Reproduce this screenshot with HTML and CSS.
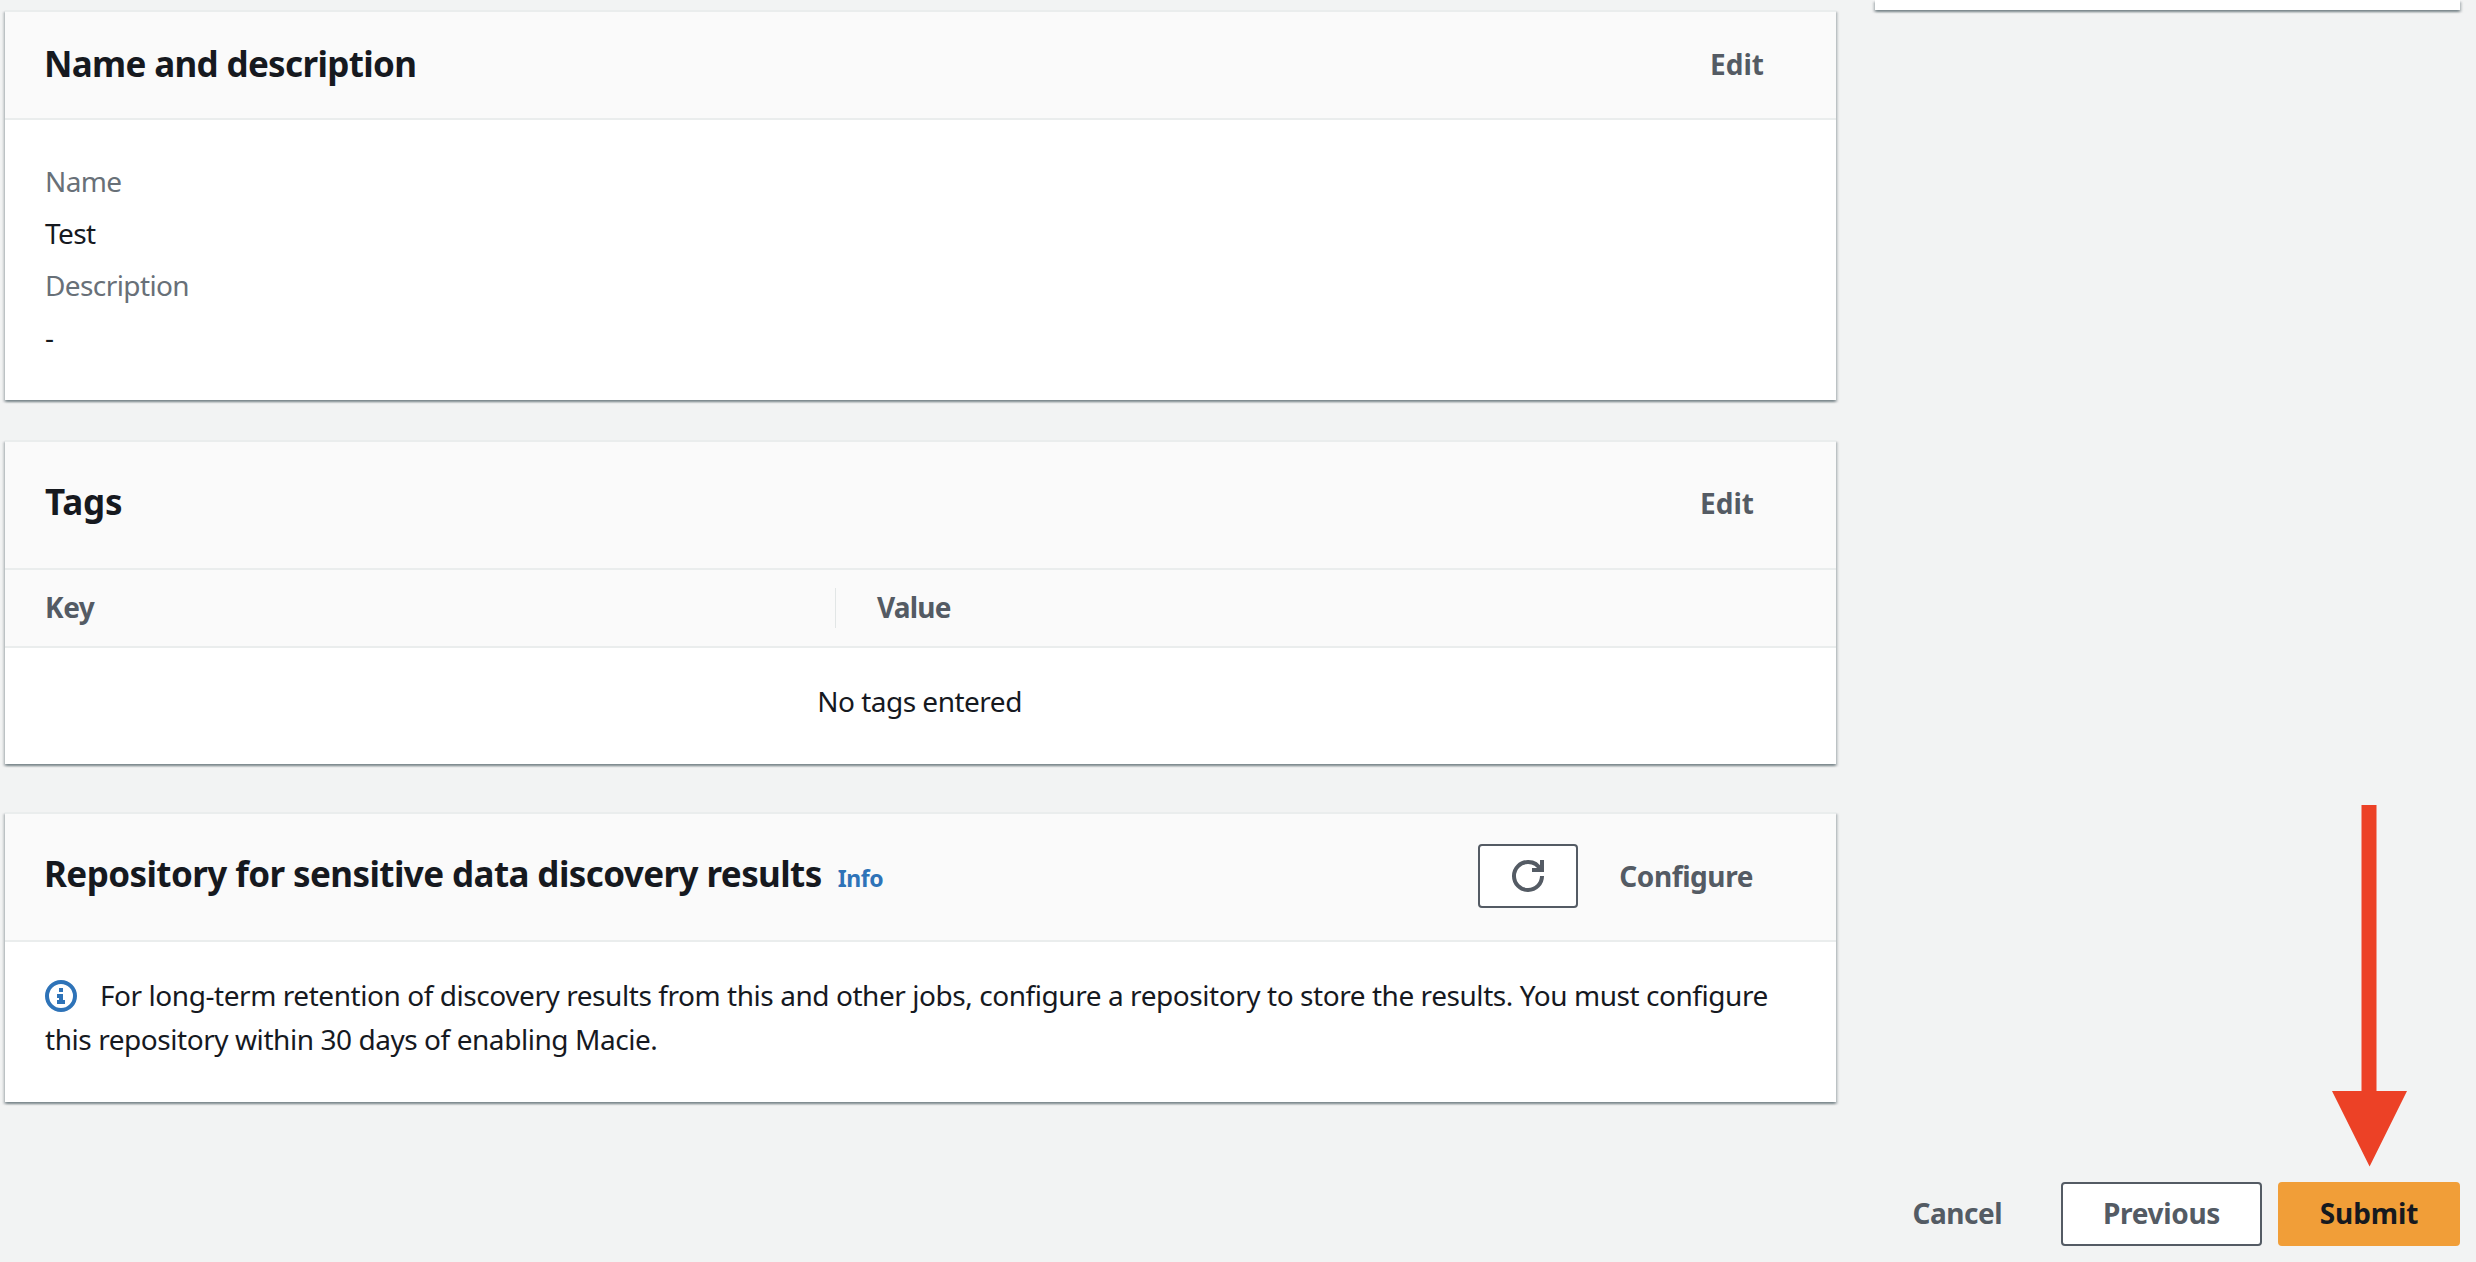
FILE: index.html
```
<!DOCTYPE html>
<html lang="en">
<head>
<meta charset="utf-8">
<title>Review and create</title>
<link rel="stylesheet" href="styles.css">
</head>
<body>
<div class="layout">
  <main class="main">
    <section class="card">
      <header class="card-header card-header--compact">
        <h2 class="title">Name and description</h2>
        <button class="link-button">Edit</button>
      </header>
      <dl class="fields">
        <dt>Name</dt>
        <dd>Test</dd>
        <dt>Description</dt>
        <dd>-</dd>
      </dl>
    </section>

    <section class="card">
      <header class="card-header">
        <h2 class="title title--short">Tags</h2>
        <button class="link-button">Edit</button>
      </header>
      <div class="table-head">
        <div class="th th--key">Key</div>
        <div class="th th--value">Value</div>
      </div>
      <div class="table-empty">No tags entered</div>
    </section>

    <section class="card card--repository">
      <header class="card-header card-header--actions">
        <h2 class="title title--long">Repository for sensitive data discovery results</h2>
        <a class="info">Info</a>
        <div class="actions">
          <button class="button button--icon" aria-label="Refresh">
            <svg class="icon" viewBox="0 0 16 16">
              <path d="M10 5h5V0"/>
              <path d="M15 8a6.957 6.957 0 0 1-7 7 6.957 6.957 0 0 1-7-7 6.957 6.957 0 0 1 7-7 6.87 6.87 0 0 1 6.3 4"/>
            </svg>
          </button>
          <button class="link-button link-button--configure">Configure</button>
        </div>
      </header>
      <p class="notice"><svg class="icon icon--info" viewBox="0 0 16 16">
          <circle cx="8" cy="8" r="7"/>
          <path d="M8 4v2M6 8h2v3M6 11h4"/>
        </svg>For long-term retention of discovery results from this and other jobs, configure a repository to store the results. You must configure this repository within 30 days of enabling Macie.</p>
    </section>
  </main>

  <aside class="side">
    <div class="card card--side"></div>
  </aside>
</div>

<footer class="footer">
  <button class="link-button link-button--cancel">Cancel</button>
  <button class="button button--previous">Previous</button>
  <button class="button button--primary">Submit</button>
</footer>

<svg class="arrow" viewBox="0 0 76 362">
  <path d="M29.5 0h15v286H75L37.6 361.5 0 286h29.5z"/>
</svg>
</body>
</html>
```
FILE: styles.css
```
* {
  box-sizing: border-box;
}

body {
  margin: 0;
  height: 1262px;
  overflow: hidden;
  position: relative;
  background: #f2f3f3;
  color: #16191f;
  font-family: "Noto Sans", "Open Sans", sans-serif;
  font-size: 28px;
  line-height: 44px;
  letter-spacing: -0.44px;
}

h2, p, dl, dd {
  margin: 0;
}

.layout {
  display: grid;
  grid-template-columns: 1831px 585px;
  column-gap: 39px;
  padding-left: 5px;
}

.main {
  display: flex;
  flex-direction: column;
  gap: 40px;
  padding-top: 10px;
}

.card {
  background: linear-gradient(#eaeded 2px, #fff 2px);
  padding-top: 2px;
  box-shadow: 0 2px 2px 0 rgba(0, 28, 36, .3),
              2px 2px 2px 0 rgba(0, 28, 36, .15),
              -2px 2px 2px 0 rgba(0, 28, 36, .15);
}

.card--repository {
  margin-top: 8px;
}

.card--side {
  height: 10px;
  background: #fff;
}

.card-header {
  display: flex;
  align-items: center;
  justify-content: space-between;
  height: 128px;
  padding: 0 82px 4px 40px;
  background: #fafafa;
  border-bottom: 2px solid #eaeded;
}

.card-header--compact {
  height: 108px;
  padding-right: 72px;
  padding-bottom: 3px;
}

.card-header--actions {
  padding-right: 83px;
  padding-bottom: 2px;
}

.title {
  margin-left: -1px;
  font-size: 35px;
  font-weight: 700;
  letter-spacing: -0.67px;
}

.title--short {
  padding-bottom: 3px;
  margin-left: 0;
  letter-spacing: -0.2px;
}

.title--long {
  padding-bottom: 5px;
  letter-spacing: -0.59px;
}

.info {
  margin-left: 16px;
  padding-top: 4px;
  color: #2e73b8;
  font-size: 23px;
  font-weight: 700;
  letter-spacing: -0.4px;
}

.actions {
  display: flex;
  align-items: center;
  gap: 41px;
  margin-left: auto;
}

button {
  font: inherit;
  letter-spacing: inherit;
}

.link-button {
  padding: 0;
  border: 0;
  background: none;
  color: #545b64;
  font-weight: 700;
  letter-spacing: 0;
}

.link-button--configure {
  padding-bottom: 1px;
  letter-spacing: -0.42px;
}

.button {
  display: flex;
  align-items: center;
  justify-content: center;
  height: 64px;
  padding: 0 0 2px;
  border: 2px solid #545b64;
  border-radius: 4px;
  background: #fff;
  color: #545b64;
  font-weight: 700;
}

.button--icon {
  width: 100px;
  padding: 0;
}

.icon {
  width: 32px;
  height: 32px;
  fill: none;
  stroke: #545b64;
  stroke-width: 2;
}

.icon--info {
  margin-right: 23px;
  vertical-align: -6px;
  stroke: #2e73b8;
}

.fields {
  padding: 35px 40px 37px;
  line-height: 52px;
  letter-spacing: -0.6px;
}

.fields dt {
  color: #687078;
}

.table-head {
  display: flex;
  align-items: center;
  height: 78px;
  padding-left: 40px;
  background: #fafafa;
  border-bottom: 2px solid #eaeded;
  color: #545b64;
  font-weight: 700;
}

.th {
  height: 40px;
  line-height: 38px;
}

.th--key {
  width: 791px;
  border-right: 1px solid #e2e6e6;
}

.th--value {
  padding-left: 41px;
  letter-spacing: -0.8px;
}

.table-empty {
  height: 116px;
  padding-right: 2px;
  line-height: 106px;
  letter-spacing: -0.5px;
  text-align: center;
}

.notice {
  padding: 31px 60px 41px 40px;
}

.footer {
  display: flex;
  align-items: center;
  justify-content: flex-end;
  gap: 16px;
  margin-top: 80px;
  padding-right: 16px;
}

.link-button--cancel {
  margin-right: 43px;
  padding-bottom: 2px;
  letter-spacing: -0.5px;
}

.button--previous {
  width: 201px;
  letter-spacing: -0.3px;
}

.button--primary {
  width: 182px;
  border-color: #f19e38;
  background: #f19e38;
  color: #16191f;
  letter-spacing: -0.1px;
}

/* Annotation drawn over the page, pointing at Submit */
.arrow {
  position: absolute;
  left: 2332px;
  top: 805px;
  width: 76px;
  height: 362px;
  fill: #ec4126;
}
```
